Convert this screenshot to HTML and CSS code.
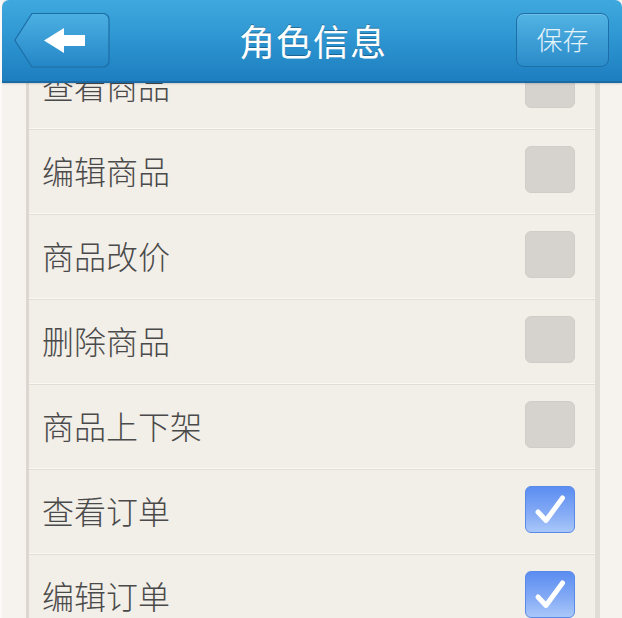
FILE: index.html
```html
<!DOCTYPE html>
<html lang="zh-CN">
<head>
<meta charset="utf-8">
<title>角色信息</title>
<link rel="stylesheet" href="styles.css">
</head>
<body>
<div class="screen">
  <header class="topbar">
    <button class="back" aria-label="返回">
      <svg width="96" height="55" viewBox="0 0 96 55">
        <defs>
          <linearGradient id="bg1" x1="0" y1="0" x2="0" y2="1">
            <stop offset="0" stop-color="#4cb0e3"/>
            <stop offset="1" stop-color="#2586c6"/>
          </linearGradient>
        </defs>
        <path d="M18 0.5H89a6 6 0 0 1 6 6V48a6 6 0 0 1-6 6H18L0.8 27.2Z" fill="url(#bg1)" stroke="#1d6ea6" stroke-width="1.2"/>
        <path d="M30 27.5L50 15V22H71V33H50V40Z" fill="#ffffff"/>
      </svg>
    </button>
    <h1 class="title">角色信息</h1>
    <button class="save">保存</button>
  </header>
  <main class="content">
    <ul class="card">
      <li class="row"><span class="label">查看商品</span><span class="check"></span></li>
      <li class="row"><span class="label">编辑商品</span><span class="check"></span></li>
      <li class="row"><span class="label">商品改价</span><span class="check"></span></li>
      <li class="row"><span class="label">删除商品</span><span class="check"></span></li>
      <li class="row"><span class="label">商品上下架</span><span class="check"></span></li>
      <li class="row"><span class="label">查看订单</span><span class="check on"><svg width="50" height="47" viewBox="0 0 50 47"><path d="M13 26L21 34.5L37.5 12" fill="none" stroke="#ffffff" stroke-width="5" stroke-linecap="round" stroke-linejoin="round"/></svg></span></li>
      <li class="row"><span class="label">编辑订单</span><span class="check on"><svg width="50" height="47" viewBox="0 0 50 47"><path d="M13 26L21 34.5L37.5 12" fill="none" stroke="#ffffff" stroke-width="5" stroke-linecap="round" stroke-linejoin="round"/></svg></span></li>
    </ul>
  </main>
</div>
</body>
</html>
```

FILE: styles.css
```css
* { box-sizing: border-box; }
html, body {
  margin: 0;
  padding: 0;
  background: #f6f3ee;
  font-family: "Noto Sans CJK SC", "Noto Sans", sans-serif;
}
.screen {
  position: relative;
  width: 622px;
  height: 618px;
  overflow: hidden;
  background: #f6f3ee;
  border-left: 2px solid #fbfaf8;
}
.topbar {
  position: absolute;
  top: 0;
  left: 0;
  right: 0;
  z-index: 2;
  height: 83px;
  display: flex;
  align-items: flex-start;
  justify-content: space-between;
  padding: 13px 12px 0 12px;
  background: linear-gradient(#3fa9de, #2b92cf 55%, #1e7ebf);
  border-bottom: 2px solid #1a6ba5;
  border-radius: 7px 7px 0 0;
  box-shadow: 0 1px 2px rgba(0,0,0,0.15);
}
.back {
  width: 96px;
  height: 55px;
  padding: 0;
  border: 0;
  background: none;
  display: block;
}
.back svg { display: block; }
.title {
  flex: 1;
  margin: 0;
  padding-top: 2px;
  text-align: center;
  color: #ffffff;
  font-size: 36px;
  font-weight: 400;
  line-height: 50px;
  letter-spacing: 1px;
  text-shadow: 0 -1px 0 rgba(0,0,0,0.3);
}
.save {
  width: 93px;
  height: 54px;
  margin-right: 1px;
  padding: 0 0 2px 0;
  border: 1px solid #1d6ea6;
  border-radius: 8px;
  background: linear-gradient(#52b3e4, #2a8bc9);
  color: #e4f2fa;
  font-family: "Noto Sans CJK SC", "Noto Sans", sans-serif;
  font-size: 26px;
  font-weight: 300;
  line-height: 1;
  box-shadow: inset 0 1px 0 rgba(255,255,255,0.18);
}
.content {
  padding: 45px 22px 0 24px;
}
.card {
  list-style: none;
  margin: 0;
  padding: 0;
  background: #f2eee8;
  border-left: 3px solid #dcd8d1;
  border-right: 5px solid #e0dcd6;
}
.row {
  height: 85px;
  display: flex;
  align-items: center;
  justify-content: space-between;
  padding: 0 20px 5px 13px;
  border-bottom: 1px solid #e2ddd5;
  box-shadow: inset 0 -1px 0 #faf8f4;
}
.label {
  color: #4a4a4a;
  font-size: 32px;
  font-weight: 300;
  line-height: 40px;
  padding-top: 0;
}
.check {
  width: 50px;
  height: 47px;
  border-radius: 6px;
  background: #d6d3cf;
  border: 1px solid #d0cdc8;
  display: block;
  overflow: hidden;
}
.check.on {
  border: 1px solid #5a8ae8;
  background: linear-gradient(#5b8df1, #86acf5 60%, #a9c7f9);
}
.check svg { display: block; margin: -1px; }
```
